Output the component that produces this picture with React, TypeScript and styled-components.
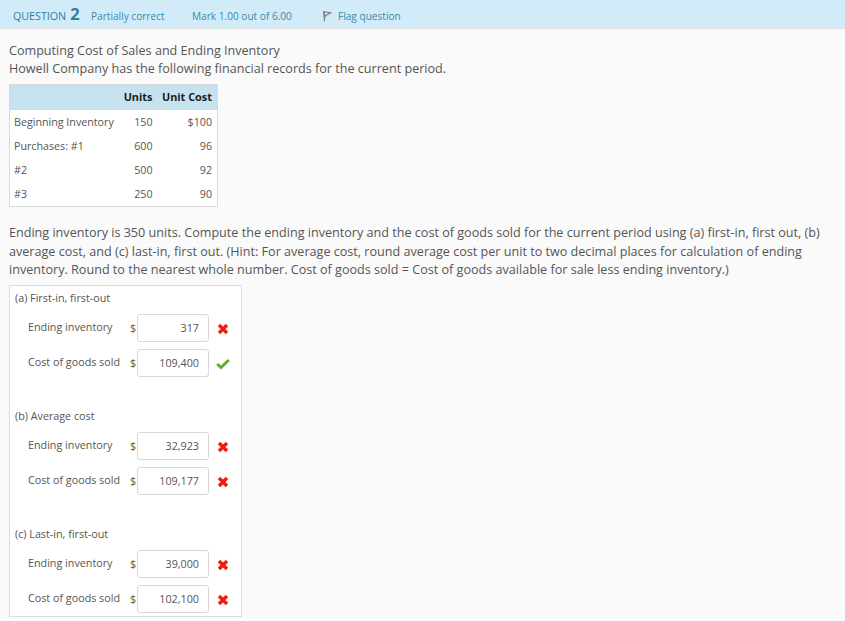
import React from 'react';
import styled, { createGlobalStyle } from 'styled-components';

const GlobalStyle = createGlobalStyle`
  html, body {
    margin: 0;
    padding: 0;
    background: #fafafa;
    font-family: 'Open Sans', sans-serif;
    color: #555;
    overflow: hidden;
  }
`;

const Page = styled.div`
  width: 845px;
  height: 621px;
  overflow: hidden;
`;

const QuestionBar = styled.header`
  display: flex;
  align-items: center;
  height: 25px;
  padding-left: 13px;
  padding-top: 3px;
  background: #d2ebf8;
  border-bottom: 1px solid #e0e0e0;
  color: #3a8aa8;
  font-size: 10.1px;
`;

const QuestionLabel = styled.span`
  display: flex;
  align-items: baseline;
  width: 78px;
  font-size: 10.7px;
  color: #2f7f9e;
  strong {
    margin-left: 4px;
    margin-top: -3px;
    font-size: 16.5px;
    font-weight: 700;
    line-height: 14px;
  }
`;

const BarItem = styled.span<{ $width: number }>`
  display: flex;
  align-items: center;
  gap: 5px;
  width: ${(p) => p.$width}px;
`;

const Body = styled.main`
  padding: 13px 9px 0;
`;

const Intro = styled.p`
  margin: 0;
  font-size: 12.6px;
  line-height: 18px;
`;

const RecordsTable = styled.table`
  margin-top: 6px;
  border-collapse: collapse;
  table-layout: fixed;
  border: 1px solid #d9d9d9;
  background: #fff;
  font-size: 10.7px;
  width: 209px;
  th {
    height: 23px;
    padding: 0 5px 2px 0;
    background: #c6e2ef;
    color: #1c1c1c;
    font-size: 10.9px;
    font-weight: 700;
    text-align: right;
  }
  td {
    height: 24px;
    padding: 0 5px 0 0;
    text-align: right;
  }
  td:first-child {
    padding-left: 4px;
    text-align: left;
  }
`;

const Hint = styled(Intro)`
  margin-top: 17px;
  width: 826px;
  line-height: 18.5px;
`;

const AnswerBox = styled.section`
  box-sizing: border-box;
  width: 233px;
  height: 332px;
  margin-top: 5px;
  padding: 5px 0 0 5px;
  background: #fff;
  border: 1px solid #dcdcdc;
  font-size: 10.75px;
`;

const AnswerGroup = styled.div`
  height: 118px;
`;

const GroupTitle = styled.div`
  height: 23px;
  line-height: 15px;
`;

const AnswerRow = styled.div`
  display: flex;
  align-items: center;
  height: 28px;
  margin-bottom: 7px;
  padding-left: 13px;
`;

const RowLabel = styled.span`
  width: 102px;
  margin-top: -2px;
`;

const Dollar = styled.span`
  width: 6.5px;
`;

const AmountBox = styled.div`
  box-sizing: border-box;
  width: 72.5px;
  height: 28px;
  padding-right: 9px;
  border: 1px solid #d8d8d8;
  border-radius: 3px;
  background: #fff;
  line-height: 26px;
  text-align: right;
`;

const Mark = styled.svg`
  width: 14px;
  height: 14px;
  margin-left: 7px;
  margin-top: 3px;
  flex: none;
`;

const WrongMark = () => (
  <Mark viewBox="0 0 14 14">
    <path d="M3 3 L11 11 M11 3 L3 11" stroke="#f21b0f" strokeWidth="3.4" fill="none" />
  </Mark>
);

const RightMark = () => (
  <Mark viewBox="0 0 14 14">
    <path d="M1.2 7 L5 10.5 L12.8 3" stroke="#62ad2c" strokeWidth="3" fill="none" />
  </Mark>
);

const FlagIcon = () => (
  <svg width="11" height="12" viewBox="0 0 11 12">
    <path d="M1 1 L10.5 2.5 L5 5.5 L3.2 7 L3 11.5 L2 11.5 Z" fill="#7d8285" />
    <path d="M2.8 2.6 L7 3 L3.4 5 Z" fill="#d2ebf8" />
  </svg>
);

const records = [
  ['Beginning Inventory', '150', '$100'],
  ['Purchases: #1', '600', '96'],
  ['#2', '500', '92'],
  ['#3', '250', '90'],
];

const groups = [
  { title: '(a) First-in, first-out', ending: '317', endingOk: false, cost: '109,400', costOk: true },
  { title: '(b) Average cost', ending: '32,923', endingOk: false, cost: '109,177', costOk: false },
  { title: '(c) Last-in, first-out', ending: '39,000', endingOk: false, cost: '102,100', costOk: false },
];

const Answer = ({ label, value, ok }: { label: string; value: string; ok: boolean }) => (
  <AnswerRow>
    <RowLabel>{label}</RowLabel>
    <Dollar>$</Dollar>
    <AmountBox>{value}</AmountBox>
    {ok ? <RightMark /> : <WrongMark />}
  </AnswerRow>
);

export default function App() {
  return (
    <Page>
      <GlobalStyle />
      <QuestionBar>
        <QuestionLabel>
          QUESTION <strong>2</strong>
        </QuestionLabel>
        <BarItem $width={101}>Partially correct</BarItem>
        <BarItem $width={130}>Mark 1.00 out of 6.00</BarItem>
        <BarItem $width={90}>
          <FlagIcon />
          Flag question
        </BarItem>
      </QuestionBar>
      <Body>
        <Intro>
          Computing Cost of Sales and Ending Inventory
          <br />
          Howell Company has the following financial records for the current period.
        </Intro>
        <RecordsTable>
          <colgroup>
            <col style={{ width: 112 }} />
            <col style={{ width: 36 }} />
            <col style={{ width: 60 }} />
          </colgroup>
          <thead>
            <tr>
              <th />
              <th>Units</th>
              <th>Unit Cost</th>
            </tr>
          </thead>
          <tbody>
            {records.map((r) => (
              <tr key={r[0]}>
                <td>{r[0]}</td>
                <td>{r[1]}</td>
                <td>{r[2]}</td>
              </tr>
            ))}
          </tbody>
        </RecordsTable>
        <Hint>
          Ending inventory is 350 units. Compute the ending inventory and the cost of goods sold for the current period
          using (a) first-in, first out, (b) average cost, and (c) last-in, first out. (Hint: For average cost, round
          average cost per unit to two decimal places for calculation of ending inventory. Round to the nearest whole
          number. Cost of goods sold = Cost of goods available for sale less ending inventory.)
        </Hint>
        <AnswerBox>
          {groups.map((g) => (
            <AnswerGroup key={g.title}>
              <GroupTitle>{g.title}</GroupTitle>
              <Answer label="Ending inventory" value={g.ending} ok={g.endingOk} />
              <Answer label="Cost of goods sold" value={g.cost} ok={g.costOk} />
            </AnswerGroup>
          ))}
        </AnswerBox>
      </Body>
    </Page>
  );
}
